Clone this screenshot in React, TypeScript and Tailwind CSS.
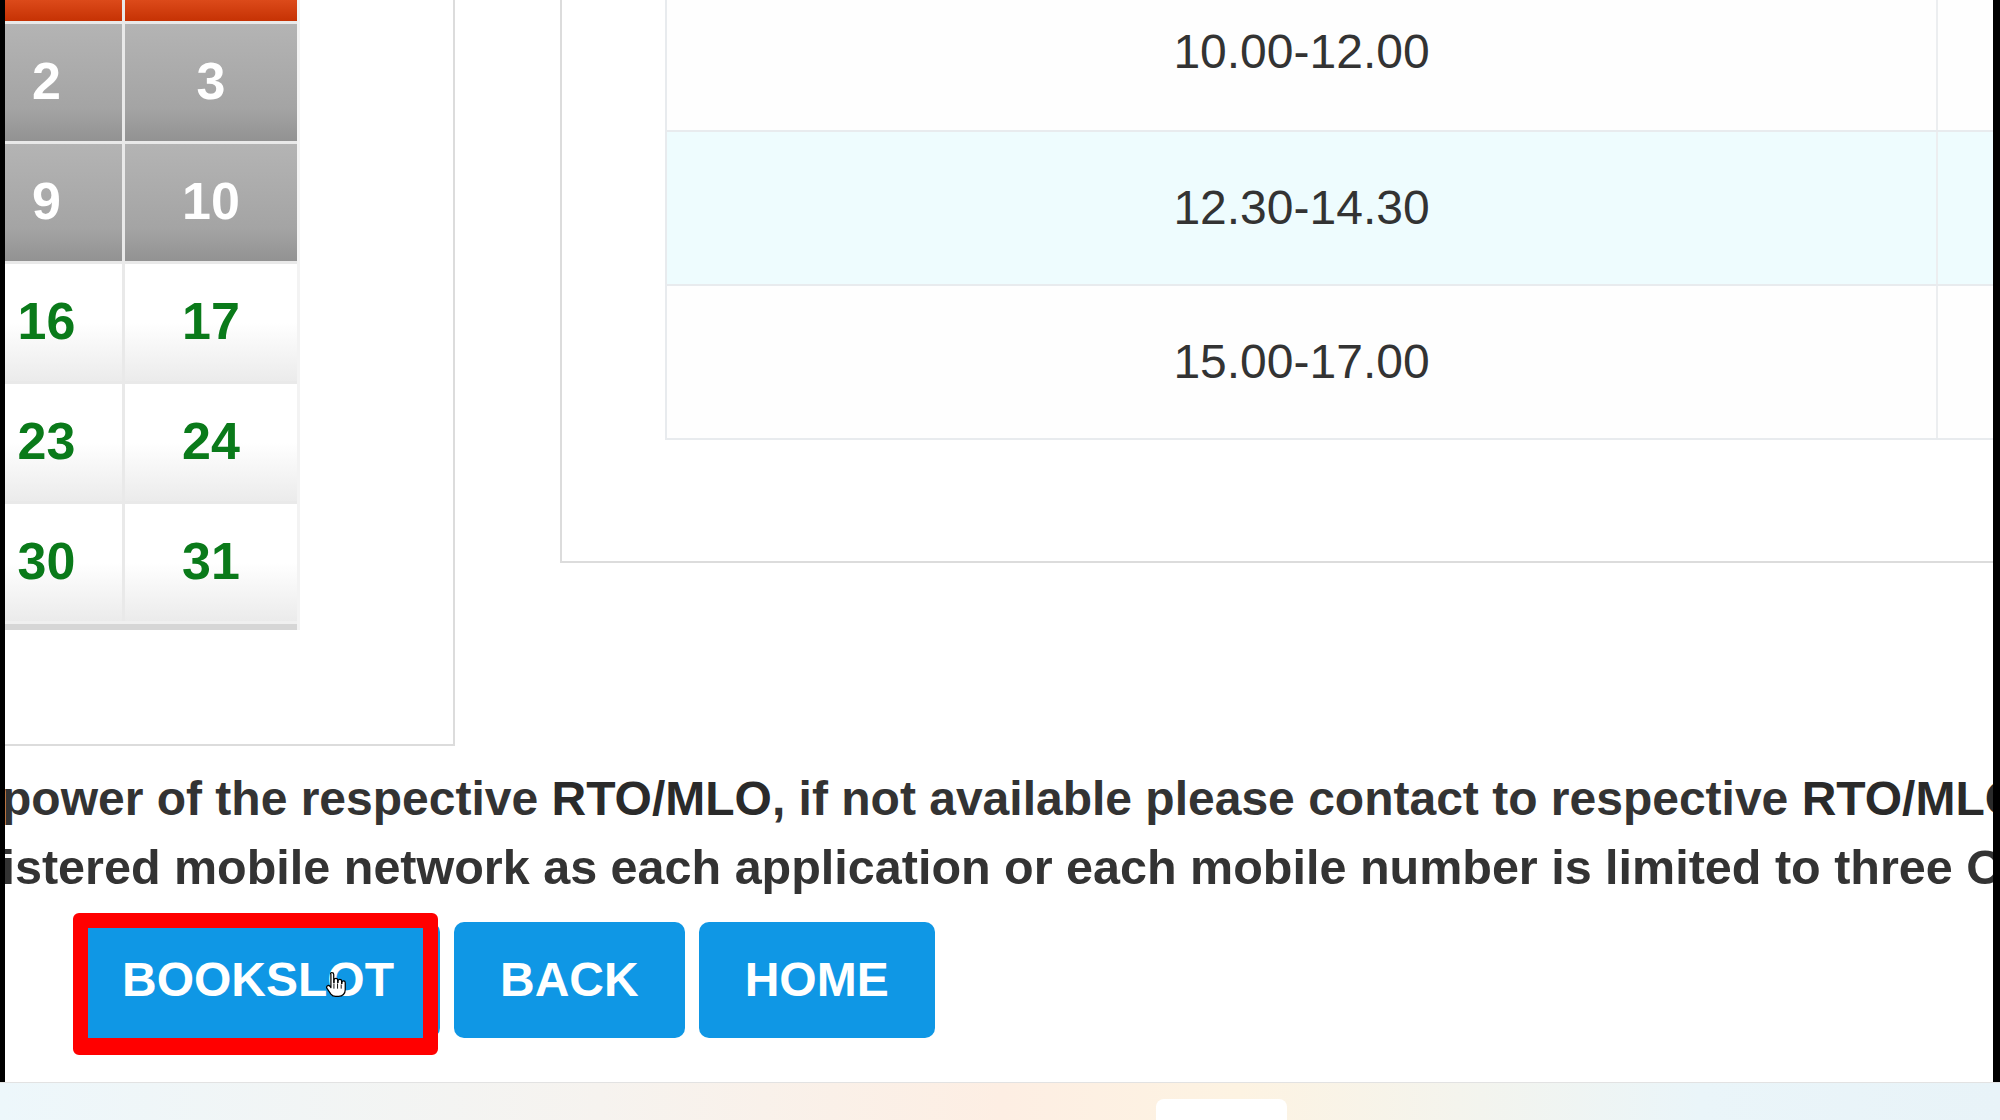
import React from "react";

const grayCell =
  "bg-[linear-gradient(to_bottom,#b4b4b4_0%,#a4a4a4_72%,#929292_100%)] text-white";
const whiteCell =
  "bg-[linear-gradient(to_bottom,#ffffff_0%,#ffffff_50%,#ebebeb_100%)] text-[#0a7a1a]";

function Cell({ n, gray, first }: { n: string; gray: boolean; first: boolean }) {
  return (
    <div
      className={`flex h-[117px] items-center justify-center pb-[3px] text-[52px] font-bold leading-none ${
        gray ? grayCell : whiteCell
      } ${first ? "pr-[34px]" : ""}`}
    >
      {n}
    </div>
  );
}

function HandCursor() {
  return (
    <svg width="22" height="27" viewBox="0 0 20 26" className="block">
      <path
        d="M6 1.5c1 0 1.8.8 1.8 1.8V11h.4V8.7c0-1 .8-1.7 1.7-1.7s1.7.8 1.7 1.7V11h.4V9.7c0-1 .8-1.7 1.7-1.7s1.7.8 1.7 1.7V12h.3v-.8c0-.9.8-1.6 1.6-1.6s1.6.7 1.6 1.6V18c0 3.7-2.6 6.5-6.3 6.5H9.5c-2 0-3.3-.8-4.4-2.2L1.3 16.8c-.6-.9-.4-2 .4-2.5.8-.6 1.9-.4 2.5.4l.9 1.3V3.3C4.2 2.3 5 1.5 6 1.5z"
        fill="white"
        stroke="black"
        strokeWidth="1.2"
        strokeLinejoin="round"
      />
      <path d="M8 12v5M11.5 12v5M15 13v4" stroke="black" strokeWidth="0.9" />
    </svg>
  );
}

export default function App() {
  const rows: [string, string, boolean][] = [
    ["2", "3", true],
    ["9", "10", true],
    ["16", "17", false],
    ["23", "24", false],
    ["30", "31", false],
  ];
  const slots = ["10.00-12.00", "12.30-14.30", "15.00-17.00"];

  return (
    <div className="flex h-[1120px] w-[2000px] flex-col overflow-hidden bg-white font-['Liberation_Sans',Arial,sans-serif]">
      <div className="flex h-[1082px] shrink-0">
        <div className="w-[5px] shrink-0 bg-black" />
        <div className="flex min-w-0 flex-1 flex-col overflow-hidden">
          {/* top panels */}
          <div className="flex items-start">
            {/* calendar panel */}
            <div className="h-[746px] w-[450px] shrink-0 border-r-2 border-b-2 border-[#dcdcdc]">
              <div className="w-[295px] border-r-[3px] border-[#f3f3f3] bg-[#e9e9e9]">
                <div className="grid grid-cols-[117px_172px] gap-x-[3px] gap-y-[3px]">
                  <div className="h-[21px] bg-[linear-gradient(to_bottom,#dc4a1a,#c63204)]" />
                  <div className="h-[21px] bg-[linear-gradient(to_bottom,#dc4a1a,#c63204)]" />
                  {rows.map(([a, b, g]) => (
                    <React.Fragment key={a}>
                      <Cell n={a} gray={g} first />
                      <Cell n={b} gray={g} first={false} />
                    </React.Fragment>
                  ))}
                </div>
                <div className="h-[3px] bg-[#f0f0f0]" />
                <div className="h-[6px] bg-[#d6d6d6]" />
              </div>
            </div>

            {/* time slot panel */}
            <div className="ml-[105px] h-[563px] min-w-0 flex-1 overflow-hidden border-l-2 border-b-2 border-[#dcdcdc] bg-white">
              <div className="-mt-[26px] ml-[103px] w-[1480px] shrink-0 border-l-2 border-[#e8ebee] text-[48px] leading-none text-[#333]">
                {slots.map((s, i) => (
                  <div
                    key={s}
                    className={`flex border-b-2 border-[#e8ebee] ${
                      i === 1 ? "bg-[#eefcfe]" : "bg-[#fefefe]"
                    } ${i === 0 ? "h-[158px]" : "h-[154px]"}`}
                  >
                    <div className="flex w-[1271px] items-center justify-center border-r-2 border-[#eceef0]">
                      {s}
                    </div>
                    <div className="flex-1" />
                  </div>
                ))}
              </div>
            </div>
          </div>

          {/* notes */}
          <div className="mt-[18px] whitespace-nowrap font-bold leading-[69px] text-[#333]">
            <p className="-ml-[3px] text-[48px]">
              power of the respective <b className="text-[#2a2a2a]">RTO/MLO</b>, if not available please contact to respective{" "}
              <b className="text-[#2a2a2a]">RTO/MLO</b>
            </p>
            <p className="-ml-[79px] text-[48.5px]">
              registered mobile network as each application or each mobile number is limited to three OTP
            </p>
          </div>

          {/* buttons */}
          <div className="ml-[71px] mt-[20px] flex gap-[14px]">
            <div className="relative">
              <button className="flex h-[116px] items-center rounded-[10px] bg-[#0f97e5] px-[46px] text-[48px] font-bold leading-none text-white">
                BOOKSLOT
              </button>
              <div className="pointer-events-none absolute left-[-3px] top-[-9px] h-[142px] w-[365px] rounded-[6px] border-[15px] border-b-[17px] border-[#f00]" />
              <div className="pointer-events-none absolute left-[249px] top-[49px]">
                <HandCursor />
              </div>
            </div>
            <button className="flex h-[116px] items-center rounded-[10px] bg-[#0f97e5] px-[46px] text-[48px] font-bold leading-none text-white">
              BACK
            </button>
            <button className="flex h-[116px] items-center rounded-[10px] bg-[#0f97e5] px-[46px] text-[48px] font-bold leading-none text-white">
              HOME
            </button>
          </div>
        </div>
        <div className="w-[7px] shrink-0 bg-black" />
      </div>

      {/* footer */}
      <div className="flex h-[38px] shrink-0 items-end border-t border-[#e2e2e2] bg-[linear-gradient(to_right,#edf7fb_0%,#f6f3ef_30%,#fdeee3_50%,#fdf3e2_62%,#eaf5f9_85%,#e8f3f8_100%)] pl-[1156px]">
        <div className="h-[21px] w-[131px] rounded-t-[8px] bg-white" />
      </div>
    </div>
  );
}
